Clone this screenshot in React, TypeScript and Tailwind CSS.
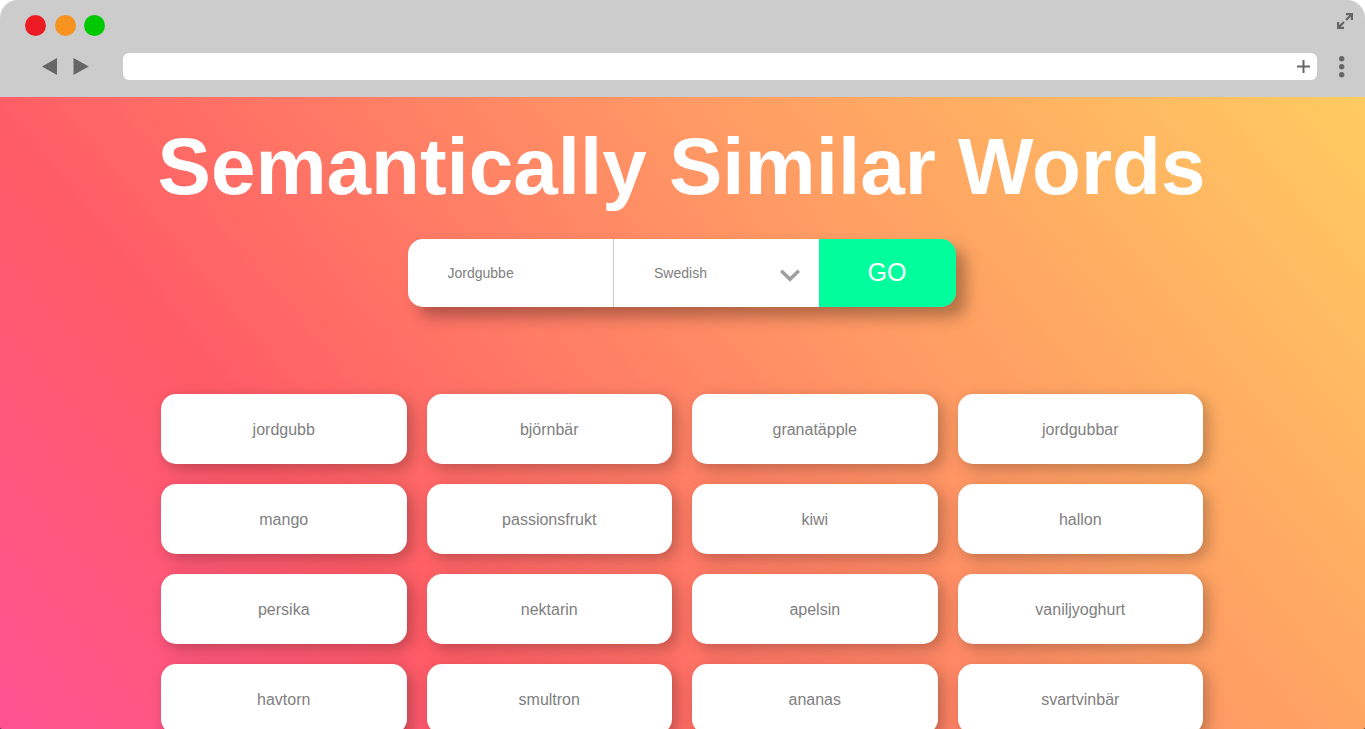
import { useState } from "react";

const words = [
  "jordgubb", "björnbär", "granatäpple", "jordgubbar",
  "mango", "passionsfrukt", "kiwi", "hallon",
  "persika", "nektarin", "apelsin", "vaniljyoghurt",
  "havtorn", "smultron", "ananas", "svartvinbär",
];

function BrowserBar() {
  return (
    <header className="h-[97px] shrink-0 bg-[#ccc] text-[#666]">
      <div className="flex h-[51px] items-center justify-between pl-[25px] pr-3">
        <div className="flex gap-2">
          <span className="size-[21px] rounded-full bg-[#ed1c24]" />
          <span className="ml-px size-[21px] rounded-full bg-[#f7931e]" />
          <span className="size-[21px] rounded-full bg-[#00c800]" />
        </div>
        <button aria-label="Expand" className="-mt-2.5">
          <svg className="block size-4" viewBox="0 0 16 16" fill="none" stroke="currentColor" strokeWidth="2.2">
            <path d="M9 1.1H14.9V7M14.5 1.5L9 7M1.1 9V14.9H7M1.5 14.5L7 9" />
          </svg>
        </button>
      </div>
      <div className="flex h-[31px] items-center pl-[42px] pr-5">
        <button aria-label="Back">
          <svg className="block h-[17px] w-[15px]" viewBox="0 0 15 17" fill="currentColor"><path d="M0 8.5L15 0V17Z" /></svg>
        </button>
        <button aria-label="Forward" className="ml-4">
          <svg className="block h-[17px] w-4" viewBox="0 0 16 17" fill="currentColor"><path d="M0.5 0L15.8 8.5L0.5 17Z" /></svg>
        </button>
        <div className="ml-[34px] flex h-[27px] flex-1 items-center rounded-md bg-white pr-[7px]">
          <input aria-label="Address" className="h-full min-w-0 flex-1 bg-transparent px-2 text-sm outline-none" />
          <button aria-label="New tab">
            <svg className="block size-[13px]" viewBox="0 0 13 13" stroke="currentColor" strokeWidth="2"><path d="M6.5 0V13M0 6.5H13" /></svg>
          </button>
        </div>
        <button aria-label="Menu" className="ml-[22px]">
          <svg className="block h-[22px] w-[6px]" viewBox="0 0 6 22" fill="currentColor">
            <circle cx="2.7" cy="2.7" r="2.7" /><circle cx="2.7" cy="10.7" r="2.7" /><circle cx="2.7" cy="18.7" r="2.7" />
          </svg>
        </button>
      </div>
    </header>
  );
}

export default function App() {
  const [word, setWord] = useState("Jordgubbe");
  return (
    <div className="bg-[linear-gradient(to_bottom,#fff_50%,#333_50%)] font-['Liberation_Sans',Arial,sans-serif]">
      <div className="flex h-screen flex-col overflow-hidden rounded-t-[18px] rounded-b-[2px]">
        <BrowserBar />
        <main className="min-h-0 flex-1 overflow-hidden bg-[linear-gradient(50deg,#ff5392_0%,#ff5b66_26%,#ff9a64_64%,#ffcb60_100%)] pr-[162px] pl-40">
          <h1 className="-mx-2 mt-[25px] whitespace-nowrap text-center text-[80px] leading-[90px] font-bold text-white">
            Semantically Similar Words
          </h1>
          <form
            onSubmit={(e) => e.preventDefault()}
            className="mx-auto mt-[27px] grid h-[68px] w-[548px] grid-cols-[3fr_3fr_2fr] overflow-hidden rounded-[15px] text-sm text-[#808080] shadow-[10px_10px_15px_rgba(0,0,0,0.3)]"
          >
            <input
              aria-label="Word"
              value={word}
              onChange={(e) => setWord(e.target.value)}
              className="min-w-0 bg-white px-10 outline-none"
            />
            <div className="relative border-l border-[#ccc] bg-white">
              <select aria-label="Language" className="size-full appearance-none bg-white px-10 outline-none">
                <option>Swedish</option>
                <option>English</option>
              </select>
              <svg className="pointer-events-none absolute top-[30px] right-[18px] h-[14px] w-[22px]" viewBox="0 0 22 14" fill="none" stroke="#a0a0a0" strokeWidth="3.6">
                <path d="M2.2 1.8L11 10.2L19.8 1.8" />
              </svg>
            </div>
            <button className="bg-[#00ff9c] text-[25px] text-white">GO</button>
          </form>
          <ul className="ml-px mt-[87px] grid grid-cols-4 gap-5">
            {words.map((w) => (
              <li
                key={w}
                className="flex h-[70px] items-center justify-center rounded-[15px] bg-white pt-px text-base text-[#808080] shadow-[5px_5px_15px_rgba(0,0,0,0.25)]"
              >
                {w}
              </li>
            ))}
          </ul>
        </main>
      </div>
    </div>
  );
}
